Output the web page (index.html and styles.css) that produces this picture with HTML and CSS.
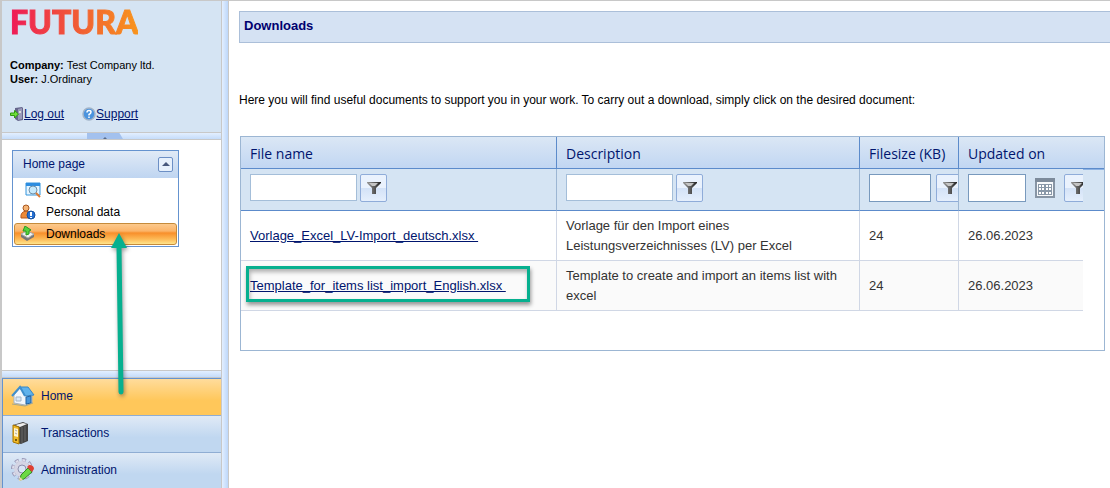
FILE: index.html
```html
<!DOCTYPE html>
<html lang="en">
<head>
    <meta charset="UTF-8">
    <meta name="viewport" content="width=device-width, initial-scale=1.0">
    <title>Downloads</title>
    <link rel="stylesheet" href="styles.css">
</head>
<body>
    <svg class="defs" aria-hidden="true">
        <defs>
            <linearGradient id="funnelFill"><stop offset="0" stop-color="#999"/><stop offset="1" stop-color="#222"/></linearGradient>
            <symbol id="funnel" viewBox="0 0 14 12">
                <path d="M0 0h14v1L9 6v6H5V6L0 1z" fill="url(#funnelFill)"/>
                <path d="M2 1h9L8 4H5z" fill="#c4c4c4"/>
            </symbol>
        </defs>
    </svg>
    <div class="page">
        <aside class="sidebar">
            <div class="account">
                <div class="logo">FUTURA</div>
                <div class="account-info">
                    <div><b>Company:</b> Test Company ltd.</div>
                    <div><b>User:</b> J.Ordinary</div>
                </div>
                <div class="account-links">
                    <a href="#"><svg width="14" height="14" viewBox="0 0 14 14"><path d="M5 1l7-1 1 1v12l-5 1-3-2z" fill="#66668c"/><path d="M8 2l4-1v11l-4 1z" fill="#9a9abb"/><path d="M9 4h2v2H9z" fill="#ddd"/><path d="M.5 6h4V3.500l4 3.500-4 4V8.500h-4z" fill="#6fe03a" stroke="#2f9912"/></svg>Log out</a>
                    <a href="#"><svg width="14" height="14" viewBox="0 0 14 14"><circle cx="7" cy="7" r="6" fill="#4a93de" stroke="#a1b3c8" stroke-width="1.500"/><path d="M5 5.500q0-2 2-2t2 1.500-2 2.500v1M7 9.500v1.500" fill="none" stroke="#fff" stroke-width="1.500"/></svg>Support</a>
                </div>
            </div>
            <div class="splitter"><span class="handle"></span></div>
            <div class="menu-pane">
                <section class="panel">
                    <div class="panel-head">
                        <span>Home page</span>
                        <button class="collapse" type="button" aria-label="Collapse"></button>
                    </div>
                    <a class="panel-item" href="#">
                        <svg width="16" height="16" viewBox="0 0 16 16"><path d="M1 1h14v12H1z" fill="#e6f5ff" stroke="#3595dc"/><path d="M1 1h14v3H1z" fill="#2d8de0"/><circle cx="8" cy="8" r="4" fill="#c5e9fc" stroke="#7090a8"/><path d="M11 11l4 4" stroke="#dc7b35" stroke-width="2"/></svg>
                        Cockpit
                    </a>
                    <a class="panel-item shifted" href="#">
                        <svg width="16" height="16" viewBox="0 0 16 16"><path d="M1 14q-1-6 5-7 5 1 5 7z" fill="#ec8938" stroke="#b55820"/><circle cx="6" cy="4" r="3" fill="#f5b577" stroke="#a95820"/><circle cx="11" cy="11" r="4" fill="#2670d4" stroke="#1450a0"/><path d="M11 8v4M11 13v1" stroke="#fff" stroke-width="2"/></svg>
                        Personal data
                    </a>
                    <a class="panel-item shifted active" href="#">
                        <svg width="16" height="16" viewBox="0 0 16 16"><path d="M1 8l6-3 7 3v3l-7 4-6-4z" fill="#777"/><path d="M1 8l6-3 7 3-6 4z" fill="#f2f2f2" stroke="#aaa"/><path d="M5 0l6 4-2 1v3L6 9V5L3 5z" fill="#55d33d" stroke="#2d9920"/></svg>
                        Downloads
                    </a>
                </section>
            </div>
            <div class="splitter"></div>
            <nav class="nav">
                <a class="nav-item active" href="#">
                    <svg width="24" height="24" viewBox="0 0 24 24"><path d="M3 11l6-7 5 7 7-1v9l-7 2-11-2z" fill="#f3f7fc" stroke="#a3b3c6"/><path d="M9 3l8 0 6 8-9 1z" fill="#5fb2ec" stroke="#3a86c2"/><path d="M1 12l8-9 5 9" fill="none" stroke="#3f8fcd" stroke-width="2"/><path d="M5 13h5v4H5z" fill="#dbe8f4" stroke="#a2b5c9"/><path d="M15 13l5-1v7l-5 1z" fill="#4595dc" stroke="#20609e"/><path d="M1 20l13 2 8-3" fill="none" stroke="#a3a68f"/></svg>
                    Home
                </a>
                <a class="nav-item" href="#">
                    <svg width="24" height="24" viewBox="0 0 24 24"><path d="M2 4L12 1l5 2v17l-7 3-8-2z" fill="#444"/><path d="M4 4l8-2 4 1-7 3z" fill="#eee"/><path d="M2 4l6 2v17l-6-2z" fill="#f0ba29" stroke="#a87700"/><path d="M3 7l4 1v8l-4-1z" fill="#fff4cf"/><path d="M4 9l2 1M4 12l2 1" stroke="#aaa"/><circle cx="5" cy="19" r="1" fill="#553c00"/><path d="M11 6v16M14 5v15" stroke="#666"/></svg>
                    Transactions
                </a>
                <a class="nav-item" href="#">
                    <svg width="24" height="24" viewBox="0 0 24 24"><circle cx="11" cy="11" r="9" fill="none" stroke="#9a9ab8" stroke-width="4" stroke-dasharray="4 3"/><circle cx="11" cy="11" r="9" fill="none" stroke="#dedeeb" stroke-width="2" stroke-dasharray="3 4" stroke-dashoffset="-.5"/><circle cx="11" cy="11" r="6" fill="none" stroke="#d5d5e4" stroke-width="4"/><circle cx="11" cy="11" r="4" fill="#d8e5f4" stroke="#8f8fad"/><path d="M9 22l1-5 7-7 4 4-8 7z" fill="#6bd944" stroke="#328a23"/><path d="M16 9l2-2q5 0 5 4l-2 3z" fill="#df4033"/><path d="M8 23l1-4 3 3z" fill="#eed7a2"/></svg>
                    Administration
                </a>
            </nav>
        </aside>
        <div class="divider"></div>
        <main class="content">
            <h1>Downloads</h1>
            <p class="intro">Here you will find useful documents to support you in your work. To carry out a download, simply click on the desired document:</p>
            <div class="grid">
                <table>
                    <colgroup>
                        <col>
                        <col class="col-description">
                        <col class="col-size">
                        <col class="col-date">
                        <col class="col-gutter">
                    </colgroup>
                    <thead>
                        <tr class="titles">
                            <th>File name</th>
                            <th>Description</th>
                            <th>Filesize (KB)</th>
                            <th colspan="2">Updated on</th>
                        </tr>
                        <tr class="filters">
                            <td><div class="filter">
                                <input type="text" aria-label="Filter file name">
                                <button type="button" aria-label="Filter"><svg width="14" height="12"><use href="#funnel"/></svg></button>
                            </div></td>
                            <td><div class="filter">
                                <input type="text" aria-label="Filter description">
                                <button type="button" aria-label="Filter"><svg width="14" height="12"><use href="#funnel"/></svg></button>
                            </div></td>
                            <td><div class="filter number">
                                <input type="text" aria-label="Filter filesize">
                                <button type="button" aria-label="Filter"><svg width="14" height="12"><use href="#funnel"/></svg></button>
                            </div></td>
                            <td class="last"><div class="filter date">
                                <input type="text" aria-label="Filter date">
                                <button class="calendar" type="button" aria-label="Open calendar"><svg width="20" height="20" viewBox="0 0 20 20"><path d="M1 1h18v18H1z" fill="#f7f9fb" stroke="#8795a5" stroke-width="2"/><path d="M0 0h20v4H0z" fill="#7d8b9b"/><path d="M3 6h14v11H3z" fill="#8998a8"/><path d="M4 7h2v2H4zM7 7h2v2H7zM11 7h2v2h-2zM14 7h2v2h-2zM4 10h2v2H4zM7 10h2v2H7zM11 10h2v2h-2zM14 10h2v2h-2zM4 14h2v2H4zM7 14h2v2H7zM11 14h2v2h-2zM14 14h2v2h-2z" fill="#fff"/></svg></button>
                                <button type="button" aria-label="Filter"><svg width="14" height="12"><use href="#funnel"/></svg></button>
                            </div></td>
                            <td class="gutter"></td>
                        </tr>
                    </thead>
                    <tbody>
                        <tr>
                            <td><a href="#">Vorlage_Excel_LV-Import_deutsch.xlsx&nbsp;</a></td>
                            <td>Vorlage für den Import eines Leistungsverzeichnisses (LV) per Excel</td>
                            <td>24</td>
                            <td class="last">26.06.2023</td>
                            <td class="gutter"></td>
                        </tr>
                        <tr class="alt">
                            <td class="marked"><a href="#">Template_for_items list_import_English.xlsx&nbsp;</a><span class="marker"></span></td>
                            <td>Template to create and import an items list with excel</td>
                            <td>24</td>
                            <td class="last">26.06.2023</td>
                            <td class="gutter"></td>
                        </tr>
                    </tbody>
                </table>
            </div>
        </main>
    </div>
    <svg class="arrow" width="24" height="170" viewBox="0 0 24 170" aria-hidden="true">
        <path d="M10 14l2 145" stroke="#06b08f" stroke-width="5" stroke-linecap="round"/>
        <path d="M10 0l8 15H2z" fill="#06b08f"/>
    </svg>
</body>
</html>
```
FILE: styles.css
```css
* {
    box-sizing: border-box;
}
body {
    margin: 0;
    font-family: "Liberation Sans", Arial, sans-serif;
    font-size: 12px;
    color: #000;
    background: #fff;
}
a {
    color: #00156e;
}
.defs {
    position: absolute;
    width: 0;
    height: 0;
}
.page {
    display: flex;
    height: 100vh;
    border-top: 1px solid #c8c8c8;
}

/* sidebar */
.sidebar {
    display: flex;
    flex-direction: column;
    flex: none;
    width: 222px;
    border-left: 2px solid #c8c8c8;
    border-right: 1px solid #c8c8c8;
}
.account {
    height: 131px;
    padding: 1px 8px 0;
    background: #d5e4f3;
}
.logo {
    width: max-content;
    font-family: Lato, sans-serif;
    font-size: 32px;
    font-weight: 900;
    line-height: 40px;
    color: transparent;
    background: linear-gradient(90deg, #ee1a57, #f15f33 55%, #f8941d);
    background-clip: text;
    -webkit-background-clip: text;
    -webkit-text-stroke: 1px transparent;
}
.account-info {
    margin-top: 16px;
    font-size: 11px;
    line-height: 14px;
}
.account-links {
    display: flex;
    gap: 18px;
    margin-top: 20px;
}
.account-links a {
    display: flex;
    align-items: center;
    line-height: 16px;
}
.splitter {
    flex: none;
    height: 8px;
    border-top: 1px solid #c8c8c8;
    border-bottom: 1px solid #c8c8c8;
    background: linear-gradient(#e3efff, #c5dcfa);
}
.handle {
    display: flex;
    justify-content: center;
    width: 36px;
    height: 6px;
    margin-left: 85px;
    background: #a3c1ee;
    clip-path: polygon(0 0, 90% 0, 100% 100%, 0 100%);
}
.handle::after {
    content: "";
    height: 3px;
    margin-top: 1px;
    border: 3px solid transparent;
    border-top: 0;
    border-bottom-color: #566b8c;
}
.menu-pane {
    flex: 1;
    padding: 10px;
}
.panel {
    width: 167px;
    padding-bottom: 1px;
    border: 1px solid #6593cf;
}
.panel-head {
    display: flex;
    align-items: center;
    justify-content: space-between;
    height: 27px;
    margin-bottom: 1px;
    padding: 0 5px 1px 10px;
    color: #00156e;
    background: linear-gradient(#e0eaf6, #bfd5f1);
}
.collapse {
    display: flex;
    align-items: center;
    justify-content: center;
    width: 15px;
    height: 15px;
    padding: 0;
    border: 1px solid #6c8fc5;
    border-radius: 2px;
    background: #e6f0fc;
}
.collapse::after {
    content: "";
    border: 4px solid transparent;
    border-top: 0;
    border-bottom-color: #46587d;
}
.panel-item {
    display: flex;
    align-items: center;
    gap: 5px;
    height: 22px;
    margin: 0 1px;
    padding-left: 10px;
    color: #000;
    text-decoration: none;
    border: 1px solid transparent;
    border-radius: 3px;
}
.panel-item.shifted {
    gap: 10px;
    padding-left: 5px;
}
.panel-item.active {
    border-color: #c58b3b;
    background: linear-gradient(#fcc98c, #fbb469 35%, #f88f2b 45%, #fdb956 75%, #ffe48c);
}
.nav {
    flex: none;
    border-top: 1px solid #6593cf;
    border-left: 1px solid #6593cf;
}
.nav-item {
    display: flex;
    align-items: center;
    gap: 6px;
    padding: 5px 8px 7px;
    color: #00156e;
    text-decoration: none;
    background: linear-gradient(#e0eaf6, #c0d7f0 60%);
    border-bottom: 1px solid #8fadd3;
}
.nav-item.active {
    background: linear-gradient(#ffdc9c, #ffc75a 60%);
}
.nav-item:last-child {
    padding-bottom: 6px;
    border-bottom: 0;
}
.divider {
    flex: none;
    width: 7px;
    border-right: 1px solid #c8c8c8;
    background: linear-gradient(90deg, #e3efff, #bdd7fa);
}

/* content */
.content {
    flex: 1;
    min-width: 0;
    padding: 10px 0 0 10px;
}
h1 {
    height: 32px;
    margin: 0;
    padding: 0 4px;
    font-size: 13px;
    line-height: 28px;
    color: #00006f;
    background: #d5e2f3;
    border: 1px solid #abbfd9;
    border-right: 0;
}
.intro {
    margin: 48px 0 27px;
    line-height: 18px;
}
.grid {
    margin: 0 5px 0 1px;
    padding-bottom: 39px;
    border: 1px solid #9cb6d3;
}
table {
    width: 100%;
    table-layout: fixed;
    border-collapse: separate;
    border-spacing: 0;
}
.col-description {
    width: 303px;
}
.col-size {
    width: 99px;
}
.col-date {
    width: 124px;
}
.col-gutter {
    width: 21px;
}
.titles th {
    height: 32px;
    padding: 2px 9px 0;
    font-family: "Open Sans", "Segoe UI", sans-serif;
    font-size: 14px;
    font-weight: normal;
    line-height: 20px;
    text-align: left;
    white-space: nowrap;
    color: #00156e;
    background: linear-gradient(#dbe7f5, #c1d6f2);
    border-right: 1px solid #5c8bcb;
    border-bottom: 1px solid #5c8bcb;
}
.titles th:last-child {
    border-right: 0;
}
.filters td {
    height: 42px;
    padding: 0 0 4px 9px;
    overflow: hidden;
    background: #d5e4f3;
    border-right: 1px solid #9cb6d3;
    border-bottom: 1px solid #5c8bcb;
}
.filters .gutter {
    border-top: 1px solid #8db2e3;
}
.filter {
    display: flex;
    align-items: center;
    gap: 3px;
    height: 28px;
    overflow: hidden;
}
.filter input {
    flex: none;
    width: 107px;
    height: 27px;
    padding: 2px 4px;
    background: #fff;
    border: 1px solid #a4bed9;
}
.filter button {
    display: flex;
    flex: none;
    align-items: center;
    justify-content: center;
    width: 27px;
    height: 28px;
    padding: 0;
    border: 1px solid #8facd9;
    border-radius: 2px;
    background: linear-gradient(#eaf2fd 50%, #d3e2f7 50%, #e5effc);
}
.filter.number {
    gap: 5px;
}
.filter.number input {
    width: 62px;
    height: 28px;
    border-color: #7899bd;
}
.filter.date {
    gap: 9px;
}
.filter.date input {
    width: 58px;
    height: 28px;
    border-color: #7899bd;
}
.filter .calendar {
    width: 20px;
    border: 0;
    background: none;
}
tbody td {
    height: 50px;
    padding: 5px 9px 4px;
    font-size: 13px;
    line-height: 20px;
    color: #333;
    border-right: 1px solid #d0d7e5;
    border-bottom: 1px solid #d0d7e5;
}
.alt td {
    background: #fafafa;
}
.filters .last,
.filters .gutter,
tbody .last,
tbody .gutter {
    border-right: 0;
}
tbody .gutter {
    padding: 0;
    background: #fff;
    border-bottom: 0;
}

/* annotations */
.marked {
    position: relative;
}
.marker {
    position: absolute;
    top: 5px;
    left: 5px;
    width: 284px;
    height: 36px;
    border: 3px solid #06b08f;
    box-shadow: 1px 3px 4px rgba(0, 0, 0, 0.4), inset 1px 3px 4px rgba(0, 0, 0, 0.3);
}
.arrow {
    position: absolute;
    top: 233px;
    left: 109px;
    filter: drop-shadow(1px 2px 2px rgba(0, 0, 0, 0.4));
    pointer-events: none;
}
```
